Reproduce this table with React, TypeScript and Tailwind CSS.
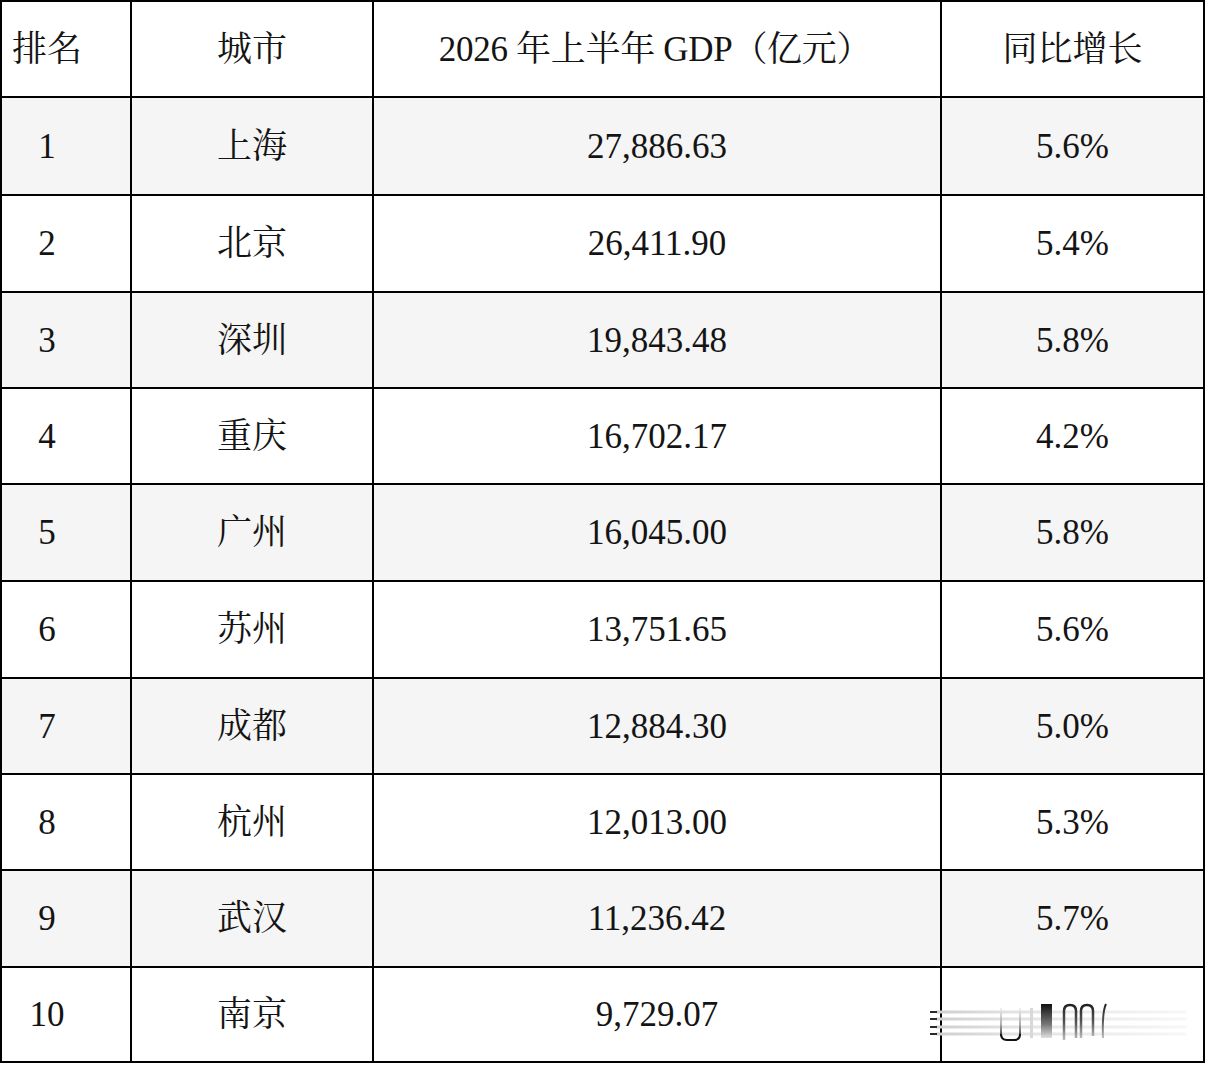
import React from "react";

const rows: [string, string, string, string][] = [
  ["1", "上海", "27,886.63", "5.6%"],
  ["2", "北京", "26,411.90", "5.4%"],
  ["3", "深圳", "19,843.48", "5.8%"],
  ["4", "重庆", "16,702.17", "4.2%"],
  ["5", "广州", "16,045.00", "5.8%"],
  ["6", "苏州", "13,751.65", "5.6%"],
  ["7", "成都", "12,884.30", "5.0%"],
  ["8", "杭州", "12,013.00", "5.3%"],
  ["9", "武汉", "11,236.42", "5.7%"],
  ["10", "南京", "9,729.07", ""],
];

function Smudge() {
  // blurred watermark-like artifact in the last cell (page origin 928,1000)
  return (
    <svg
      className="absolute left-[-14px] top-[32px] pointer-events-none"
      width="262"
      height="46"
      viewBox="928 1000 262 46"
    >
      <defs>
        <linearGradient id="stripe" x1="0" y1="0" x2="1" y2="0">
          <stop offset="0" stopColor="#cfcfcf" />
          <stop offset="0.3" stopColor="#e2e2e2" />
          <stop offset="0.7" stopColor="#eeeeee" />
          <stop offset="1" stopColor="#f7f7f7" />
        </linearGradient>
        <linearGradient id="down" x1="0" y1="0" x2="0" y2="1">
          <stop offset="0" stopColor="#111" />
          <stop offset="0.6" stopColor="#777" />
          <stop offset="1" stopColor="#e0e0e0" />
        </linearGradient>
        <linearGradient id="up" x1="0" y1="0" x2="0" y2="1">
          <stop offset="0" stopColor="#eeeeee" />
          <stop offset="0.6" stopColor="#999" />
          <stop offset="1" stopColor="#111" />
        </linearGradient>
        <linearGradient id="arch" x1="0" y1="0" x2="0" y2="1">
          <stop offset="0" stopColor="#222" />
          <stop offset="0.5" stopColor="#555" />
          <stop offset="1" stopColor="#bbb" />
        </linearGradient>
      </defs>
      {[1012, 1019, 1027, 1034].map((y) => (
        <g key={y}>
          <rect x="936" y={y - 1.5} width="250" height="3" fill="url(#stripe)" />
          <line x1="930" y1={y} x2="937" y2={y} stroke="#2a2a2a" strokeWidth="2" />
        </g>
      ))}
      <rect x="1000" y="1008" width="2" height="28" fill="url(#up)" opacity="0.8" />
      <rect x="1019" y="1008" width="2" height="28" fill="url(#up)" opacity="0.8" />
      <path
        d="M1001 1034 Q1001 1040 1007 1040 L1014 1040 Q1020 1040 1020 1034"
        fill="none"
        stroke="#111"
        strokeWidth="2"
      />
      <rect x="1030" y="1008" width="3" height="30" fill="#d8d8d8" />
      <rect x="1041" y="1004" width="11" height="34" fill="url(#down)" />
      <path
        d="M1064 1040 L1064 1011 Q1064 1005 1070 1005 Q1076 1005 1076 1011 L1076 1038"
        fill="none"
        stroke="url(#arch)"
        strokeWidth="2.5"
      />
      <path
        d="M1081 1038 L1081 1011 Q1081 1005 1087 1005 Q1093 1005 1093 1011 L1093 1036"
        fill="none"
        stroke="url(#arch)"
        strokeWidth="2.5"
      />
      <path
        d="M1106 1004 Q1102 1012 1103 1038"
        fill="none"
        stroke="url(#arch)"
        strokeWidth="2"
      />
    </svg>
  );
}

export default function App() {
  const font =
    "font-['Liberation_Serif','Noto_Serif_CJK_SC','Noto_Sans_CJK_SC',serif]";
  return (
    <div className="w-[1208px] h-[1066px] bg-white">
      <div
        className={`w-[1205px] grid grid-cols-[128px_240px_566px_261px] grid-rows-[94px_96px_95px_94px_94px_95px_95px_94px_94px_95px_93px] gap-[2px] p-[2px] bg-black text-[35px] leading-none text-[#141414] ${font}`}
      >
        <div className="bg-white flex items-center justify-center pr-[38px]">排名</div>
        <div className="bg-white flex items-center justify-center">城市</div>
        <div className="bg-white flex items-center justify-center pr-[4px]">
          <span className="tracking-[-0.3px]">2026 年上半年 GDP（亿元）</span>
        </div>
        <div className="bg-white flex items-center justify-center">同比增长</div>
        {rows.map((r, i) => {
          const bg = i % 2 === 0 ? "bg-[#f5f5f5]" : "bg-white";
          return (
            <React.Fragment key={r[0]}>
              <div className={`${bg} flex items-center justify-center pr-[38px]`}>{r[0]}</div>
              <div className={`${bg} flex items-center justify-center`}>{r[1]}</div>
              <div className={`${bg} flex items-center justify-center`}>{r[2]}</div>
              <div className={`${bg} relative flex items-center justify-center`}>
                {r[3]}
                {i === 9 && <Smudge />}
              </div>
            </React.Fragment>
          );
        })}
      </div>
    </div>
  );
}
